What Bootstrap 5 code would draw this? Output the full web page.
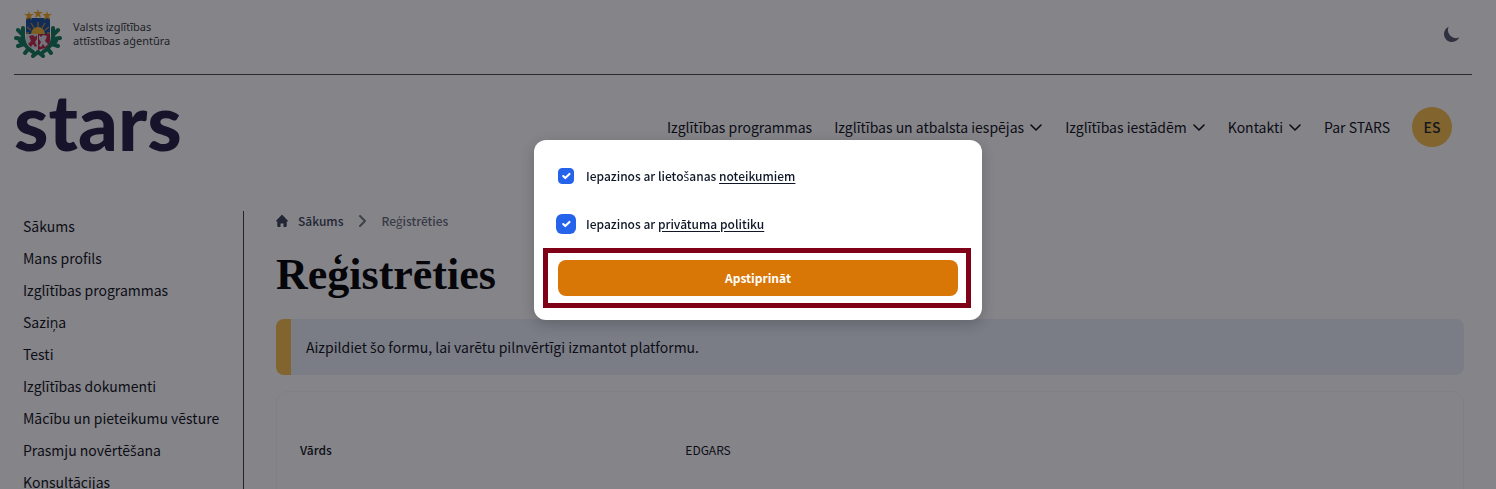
<!DOCTYPE html>
<html lang="lv">
<head>
<meta charset="utf-8">
<meta name="viewport" content="width=device-width, initial-scale=1">
<title>STARS – Reģistrēties</title>
<link href="https://cdn.jsdelivr.net/npm/bootstrap@5.3.0/dist/css/bootstrap.min.css" rel="stylesheet">
<style>
  body { font-family: "Noto Sans CJK JP", "Open Sans", sans-serif; font-size: 14px; line-height: 24px; color: #101116; background: #fff; }
  a { color: inherit; text-decoration: none; }
  /* the CJK family has no s with caron */
  .caron { font-family: "Open Sans", sans-serif; line-height: 1; }
  .site { padding: 0 24px 0 14px; }
  .topbar { height: 75px; border-bottom: 1px solid #4b4b4e; padding: 0 10px 6px 0; }
  .agency { font-family: "Noto Sans", sans-serif; font-size: 11px; line-height: 14px; color: #3a3b40; gap: 11px; }
  .theme-btn { color: #55596a; }
  .mainbar { height: 104px; padding-right: 20px; }
  .wordmark { font-family: Lato, sans-serif; font-weight: 900; font-size: 78px; line-height: 74px; padding-bottom: 12px; color: #241c40; }
  .menu { gap: 22px; }
  .drop { gap: 5px; color: inherit; }
  .avatar { width: 40px; height: 40px; background: #fbbe48; font-weight: 500; font-size: 14px; }
  .side { width: 230px; flex: none; padding: 3px 0 0 9px; border-right: 1px solid #3c3c40; margin-top: 32px; }
  .side a { display: block; padding: 0 0 8px; height: 32px; white-space: nowrap; }
  .content-area { padding: 32px 8px 0 32px; min-width: 0; }
  .crumbs { font-size: 12px; line-height: 20px; font-weight: 500; color: #3b4356; gap: 12px; }
  .crumbs .current { color: #686c78; }
  .page-title { font-family: "Liberation Serif", serif; font-weight: 700; font-size: 44px; line-height: 48px; margin: 20px 0; color: #000; }
  .notice { background: #ebf0f9; border-left: 15px solid #fbbe48; border-radius: 8px; padding: 16px 15px; }
  .profile { border: 1px solid #f5f5f8; border-radius: 12px; margin-top: 16px; padding: 46px 23px; font-size: 12px; min-height: 240px; }
  .modal { background: rgba(9, 10, 20, .5); padding: 140px 0 0 20px; }
  .modal-dialog { max-width: 448px; margin: 0 auto; }
  .modal-content { border: 0; border-radius: 12px; padding: 24px; box-shadow: 0 4px 14px rgba(0, 0, 0, .2); font-size: 12px; color: #101828; }
  .consent { height: 24px; margin-bottom: 24px; gap: 12px; font-weight: 500; }
  .consent a { text-decoration: underline; text-underline-offset: 2px; }
  .tick { width: 16px; height: 16px; margin: 0; border-radius: 4px !important; }
  .tick:checked { background-color: #2563eb; border-color: #2563eb; }
  .tick:focus, .tick.on { box-shadow: 0 0 0 2px #2563eb; }
  .confirm { height: 36px; width: 100%; border: 0; border-radius: 8px; background: #d97706; color: #fff; font-weight: 700; }
  .frame { position: absolute; inset: -12px -13px -12px -15px; border: 5px solid #800018; pointer-events: none; }
</style>
</head>
<body class="modal-open overflow-hidden">
<div class="site">
  <header>
    <div class="topbar d-flex align-items-center justify-content-between">
      <a href="#" class="agency d-flex align-items-center">
        <svg width="48" height="50" viewBox="0 0 48 50" aria-hidden="true">
          <g fill="none" stroke="#137a59" stroke-width="4" stroke-linecap="round">
            <path d="M4 21l4 4M2 29l6 1M4 37l6-2M9 19v8M9 27c0 7 3 12 10 16M11 44l4-5M19 47l5-4M6 32l5 4"/>
            <path d="M44 21l-4 4M46 29l-6 1M44 37l-6-2M39 19v8M39 27c0 7-3 12-10 16M37 44l-4-5M29 47l-5-4M42 32l-5 4"/>
          </g>
          <path d="M12 9h24v16H12z" fill="#174f9a"/>
          <path d="M24 18v-5M20 19l-3-5M28 19l3-5M17 21l-4-3M31 21l4-3M15 24h-3M33 24h3" stroke="#c08a38" stroke-width="1.400"/>
          <path d="M17 25a7 7 0 0 1 14 0z" fill="#f3b530"/>
          <path d="M12 25h12v16c-7-1-12-4-12-10z" fill="#dcdce2"/>
          <path d="M24 25h12v6c0 6-5 9-12 10z" fill="#bd2541"/>
          <path d="M15 27l4-1 2 2 2-2v4l-2 3 2 4-2 1-2-3-2 3-3-3 3-3z" fill="#c12844"/>
          <path d="M33 27l-4-1-2 2-2-2v4l2 3-2 4 2 1 2-3 2 3 3-3-3-3z" fill="#dcdce2"/>
          <g fill="#f3a91f">
            <path d="M24 0l1 3h4l-3 2 1 4-3-2-3 2 1-4-3-2h4z"/>
            <path d="M15 2l1 3h4l-3 2 1 4-3-2-3 2 1-4-3-2h4z"/>
            <path d="M33 2l1 3h4l-3 2 1 4-3-2-3 2 1-4-3-2h4z"/>
          </g>
        </svg>
        <span>Valsts izglītības<br>attīstības aģentūra</span>
      </a>
      <button class="theme-btn btn p-0 border-0 d-flex" type="button" aria-label="Tumšais režīms">
        <svg width="20" height="20" viewBox="0 0 20 20" fill="currentColor"><path d="M17.293 13.293A8 8 0 0 1 6.707 2.707a8.001 8.001 0 1 0 10.586 10.586z"/></svg>
      </button>
    </div>
    <div class="mainbar d-flex align-items-center justify-content-between">
      <a href="#" class="wordmark">stars</a>
      <nav class="menu d-flex align-items-center text-nowrap" aria-label="Galvenā izvēlne">
        <a href="#">Izglītības programmas</a>
        <a href="#" class="drop d-flex align-items-center">Izglītības un atbalsta iespējas <svg width="14" height="14" viewBox="0 0 14 14" fill="none" stroke="currentColor" stroke-width="1.600" stroke-linecap="round" stroke-linejoin="round"><path d="M2 5l5 5 5-5"/></svg></a>
        <a href="#" class="drop d-flex align-items-center">Izglītības iestādēm <svg width="14" height="14" viewBox="0 0 14 14" fill="none" stroke="currentColor" stroke-width="1.600" stroke-linecap="round" stroke-linejoin="round"><path d="M2 5l5 5 5-5"/></svg></a>
        <a href="#" class="drop d-flex align-items-center">Kontakti <svg width="14" height="14" viewBox="0 0 14 14" fill="none" stroke="currentColor" stroke-width="1.600" stroke-linecap="round" stroke-linejoin="round"><path d="M2 5l5 5 5-5"/></svg></a>
        <a href="#">Par STARS</a>
        <button type="button" class="avatar btn rounded-circle p-0 border-0">ES</button>
      </nav>
    </div>
  </header>
  <div class="d-flex">
    <nav class="side" aria-label="Sānu izvēlne">
      <a href="#">Sākums</a>
      <a href="#">Mans profils</a>
      <a href="#">Izglītības programmas</a>
      <a href="#">Saziņa</a>
      <a href="#">Testi</a>
      <a href="#">Izglītības dokumenti</a>
      <a href="#">Mācību un pieteikumu vēsture</a>
      <a href="#">Prasmju novērtē<span class="caron">š</span>ana</a>
      <a href="#">Konsultācijas</a>
    </nav>
    <main class="content-area flex-grow-1">
      <nav class="crumbs d-flex align-items-center" aria-label="Atrašanās vieta">
        <a href="#" class="d-flex align-items-center gap-2">
          <svg width="14" height="14" viewBox="0 0 14 14" fill="currentColor" aria-hidden="true"><path d="M5.300 1.200a1 1 0 0 1 1.400 0l5 5.200c.5.500.2 1.200-.4 1.200h-.6V12a1 1 0 0 1-1 1H7.500V9.500h-3V13H2.300a1 1 0 0 1-1-1V7.600H.700c-.6 0-.9-.7-.4-1.200z"/></svg>
          Sākums</a>
        <svg width="14" height="14" viewBox="0 0 14 14" fill="none" stroke="#70747f" stroke-width="2" stroke-linecap="round" stroke-linejoin="round" aria-hidden="true"><path d="M5 2l5 5-5 5"/></svg>
        <span class="current">Reģistrēties</span>
      </nav>
      <h1 class="page-title">Reģistrēties</h1>
      <div class="notice">Aizpildiet <span class="caron">š</span>o formu, lai varētu pilnvērtīgi izmantot platformu.</div>
      <div class="profile">
        <div class="row gx-3"><div class="col-4 fw-medium">Vārds</div><div class="col">EDGARS</div></div>
      </div>
    </main>
  </div>
</div>
<div class="modal show d-block overflow-hidden" role="dialog" aria-modal="true" aria-label="Noteikumu apstiprināšana">
  <div class="modal-dialog">
    <form class="modal-content">
      <div class="consent d-flex align-items-center">
        <input class="tick form-check-input" type="checkbox" id="terms" checked>
        <label for="terms">Iepazinos ar lieto<span class="caron">š</span>anas <a href="#">noteikumiem</a></label>
      </div>
      <div class="consent d-flex align-items-center">
        <input class="tick on form-check-input" type="checkbox" id="privacy" checked>
        <label for="privacy">Iepazinos ar <a href="#">privātuma politiku</a></label>
      </div>
      <div class="position-relative">
        <button type="button" class="confirm">Apstiprināt</button>
        <div class="frame"></div>
      </div>
    </form>
  </div>
</div>
<script src="https://cdn.jsdelivr.net/npm/bootstrap@5.3.0/dist/js/bootstrap.bundle.min.js"></script>
</body>
</html>
